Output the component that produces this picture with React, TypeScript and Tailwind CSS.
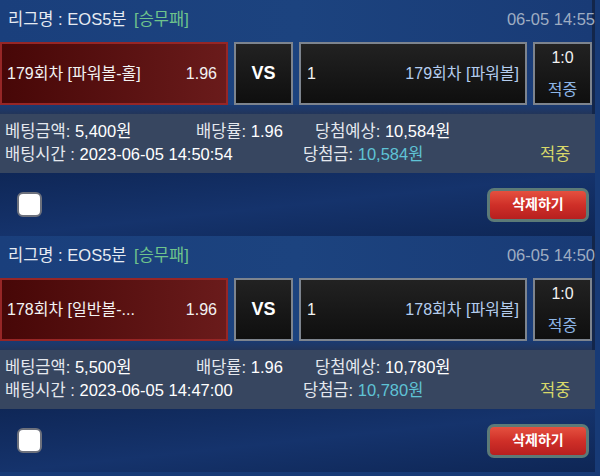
import React from "react";

interface Bet {
  round: number;
  pick: string;
  odds: string;
  time: string;
  amount: string;
  expected: string;
  placedAt: string;
  won: string;
}

const bets: Bet[] = [
  {
    round: 179,
    pick: "179회차 [파워볼-홀]",
    odds: "1.96",
    time: "06-05 14:55",
    amount: "5,400원",
    expected: "10,584원",
    placedAt: "2023-06-05 14:50:54",
    won: "10,584원",
  },
  {
    round: 178,
    pick: "178회차 [일반볼-...",
    odds: "1.96",
    time: "06-05 14:50",
    amount: "5,500원",
    expected: "10,780원",
    placedAt: "2023-06-05 14:47:00",
    won: "10,780원",
  },
];

function BetCard({ bet }: { bet: Bet }) {
  return (
    <div className="w-[595px]">
      <div className="bg-gradient-to-r from-[#1a3f7c] via-[#1c437f] to-[#193b76] border-r-[3px] border-[#13264a]">
        <div className="h-[38px] flex items-center justify-between pl-[8px] text-[16.5px]">
          <div className="text-[#e6ebf2]">
            리그명 : EOS5분 <span className="ml-[3px] text-[#6fc48c]">[승무패]</span>
          </div>
          <div className="text-[#9fadc2] -mr-[3px]">{bet.time}</div>
        </div>
        <div className="mt-[4px] h-[63px] flex gap-[6px] text-[16px]">
          <div className="w-[228px] h-full border-2 border-[#962626] bg-gradient-to-r from-[#470707] to-[#6a1b1b] flex items-center justify-between pl-[5px] pr-[9px] text-[#f2f2f2]">
            <span>{bet.pick}</span>
            <span>{bet.odds}</span>
          </div>
          <div className="w-[59px] h-full border-2 border-[#7d848e] bg-gradient-to-b from-[#222222] to-[#0f0f0f] flex items-center justify-center text-white font-bold text-[18px]">
            VS
          </div>
          <div className="w-[228px] h-full border-2 border-[#7d848e] bg-gradient-to-b from-[#222222] to-[#0f0f0f] flex items-center justify-between pl-[6px] pr-[6px]">
            <span className="text-[#f2f2f2]">1</span>
            <span className="text-[#b4cdee]">{bet.round}회차 [파워볼]</span>
          </div>
          <div className="w-[59px] h-full border-2 border-[#7d848e] bg-gradient-to-b from-[#222222] to-[#0f0f0f] flex flex-col items-center justify-center leading-[32px]">
            <span className="text-[#f2f2f2]">1:0</span>
            <span className="text-[#8db5e6]">적중</span>
          </div>
        </div>
        <div className="h-[9px] bg-gradient-to-b from-[#1a3a72] to-[#22355a]" />
      </div>
      <div className="h-[59px] bg-[#374660] px-[5px] pt-[6px] text-[16.5px] leading-[23px] text-[#e4e8ee]">
        <div className="flex">
          <div className="w-[191px]">
            베팅금액: <span className="text-white">{bet.amount}</span>
          </div>
          <div className="w-[119px]">
            배당률: <span className="text-white">{bet.odds}</span>
          </div>
          <div>
            당첨예상: <span className="text-white">{bet.expected}</span>
          </div>
        </div>
        <div className="flex">
          <div className="w-[298px]">
            배팅시간 : <span className="text-white">{bet.placedAt}</span>
          </div>
          <div className="w-[237px]">
            당첨금: <span className="text-[#5fc3d6]">{bet.won}</span>
          </div>
          <div className="text-[#d8d86a]">적중</div>
        </div>
      </div>
      <div className="h-[63px] flex items-center justify-between pl-[17px] pr-[6px] bg-gradient-to-br from-[#0f2757] via-[#15336c] to-[#0e2655]">
        <div className="w-[25px] h-[25px] rounded-[6px] bg-white border-2 border-[#6d717c]" />
        <button className="w-[102px] h-[34px] rounded-[7px] border-[3px] border-[#5c7a77] bg-gradient-to-b from-[#e5503f] via-[#cf2f28] to-[#b71f1f] text-white font-bold text-[14px] flex items-center justify-center">
          삭제하기
        </button>
      </div>
    </div>
  );
}

export default function App() {
  return (
    <div
      className="w-[600px] h-[476px] overflow-hidden bg-[#173a76]"
      style={{ fontFamily: '"Liberation Sans", "Noto Sans CJK KR", sans-serif' }}
    >
      {bets.map((b) => (
        <BetCard key={b.round} bet={b} />
      ))}
    </div>
  );
}
